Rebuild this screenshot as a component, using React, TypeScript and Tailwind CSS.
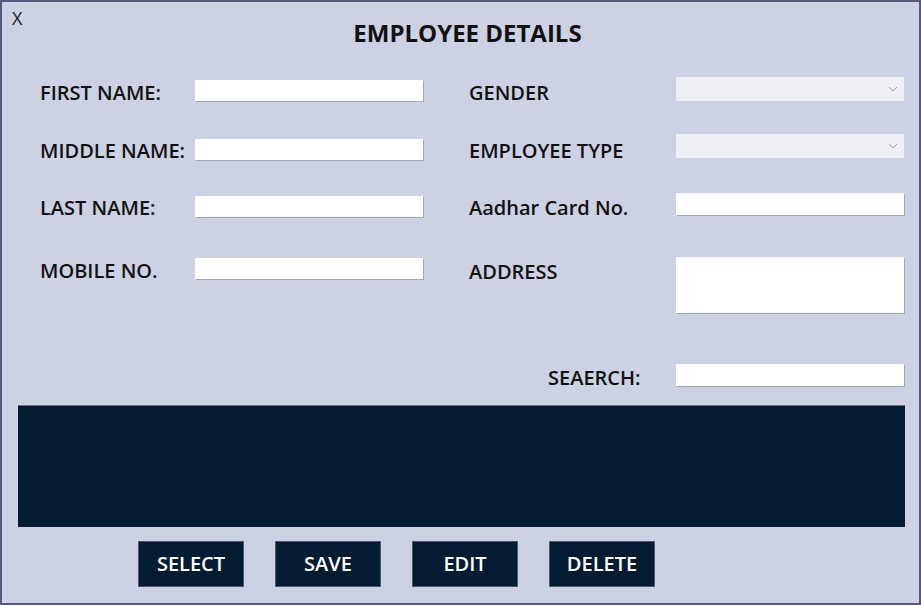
import React from "react"

const font = { fontFamily: "'Open Sans', 'Noto Sans', sans-serif" }

function TextBox({ className = "" }: { className?: string }) {
  return <div className={`bg-white shadow-[1px_1px_0_#a3a6b8] ${className}`} />
}

function Combo() {
  return (
    <div className="w-[228px] h-[24px] bg-[#eeeff5] flex items-center justify-end pr-[6px]">
      <svg width="10" height="6" viewBox="0 0 10 6" fill="none">
        <path d="M1 1l4 4 4-4" stroke="#9a9cab" strokeWidth="1" />
      </svg>
    </div>
  )
}

function Label({ children, className = "" }: { children: React.ReactNode; className?: string }) {
  return (
    <span className={`text-[20px] font-semibold text-[#111] leading-[24px] whitespace-nowrap ${className}`}>
      {children}
    </span>
  )
}

export default function App() {
  const buttons = ["SELECT", "SAVE", "EDIT", "DELETE"]

  return (
    <div
      style={font}
      className="w-[921px] h-[605px] bg-[#ccd1e4] border-2 border-[#58587a] relative flex flex-col"
    >
      {/* header */}
      <button className="absolute left-[10px] top-[7px] text-[18px] text-[#222] leading-none">X</button>
      <div className="h-[68px] pt-[16px] pl-[14px] text-center">
        <h1 className="text-[24px] font-bold text-[#111] leading-[30px]">EMPLOYEE DETAILS</h1>
      </div>

      {/* fields */}
      <div className="flex">
        <div className="ml-[38px] flex flex-col">
          <div className="mt-[10px] h-[21px] flex items-center">
            <Label className="w-[155px] mt-[5px]">FIRST NAME:</Label>
            <TextBox className="w-[228px] h-[21px]" />
          </div>
          <div className="mt-[38px] h-[21px] flex items-center">
            <Label className="w-[155px] mt-[3px]">MIDDLE NAME:</Label>
            <TextBox className="w-[228px] h-[21px]" />
          </div>
          <div className="mt-[36px] h-[21px] flex items-center">
            <Label className="w-[155px] mt-[3px]">LAST NAME:</Label>
            <TextBox className="w-[228px] h-[21px]" />
          </div>
          <div className="mt-[41px] h-[21px] flex items-center">
            <Label className="w-[155px] mt-[5px]">MOBILE NO.</Label>
            <TextBox className="w-[228px] h-[21px]" />
          </div>
        </div>

        <div className="ml-[46px] flex flex-col">
          <div className="mt-[7px] h-[24px] flex items-center">
            <Label className="w-[207px] mt-[8px]">GENDER</Label>
            <Combo />
          </div>
          <div className="mt-[33px] h-[24px] flex items-center">
            <Label className="w-[207px] mt-[10px]">EMPLOYEE TYPE</Label>
            <Combo />
          </div>
          <div className="mt-[35px] h-[22px] flex items-center">
            <Label className="w-[207px] mt-[8px]">Aadhar Card No.</Label>
            <TextBox className="w-[228px] h-[22px]" />
          </div>
          <div className="mt-[42px] h-[56px] flex items-start">
            <Label className="w-[207px] mt-[3px]">ADDRESS</Label>
            <TextBox className="w-[228px] h-[56px]" />
          </div>
          <div className="mt-[51px] h-[22px] flex items-center">
            <Label className="w-[207px] pl-[79px] mt-[6px]">SEAERCH:</Label>
            <TextBox className="w-[228px] h-[22px]" />
          </div>
        </div>
      </div>

      {/* grid panel */}
      <div className="mt-[19px] ml-[16px] mr-[14px] h-[122px] bg-[#041c32] border-t border-[#6b7383]" />

      {/* actions */}
      <div className="mt-[14px] ml-[136px] flex gap-[31px]">
        {buttons.map((b) => (
          <button
            key={b}
            className="w-[106px] h-[46px] bg-[#041c32] border border-[#4d5868] text-white text-[20px] font-semibold leading-none"
          >
            {b}
          </button>
        ))}
      </div>
    </div>
  )
}
